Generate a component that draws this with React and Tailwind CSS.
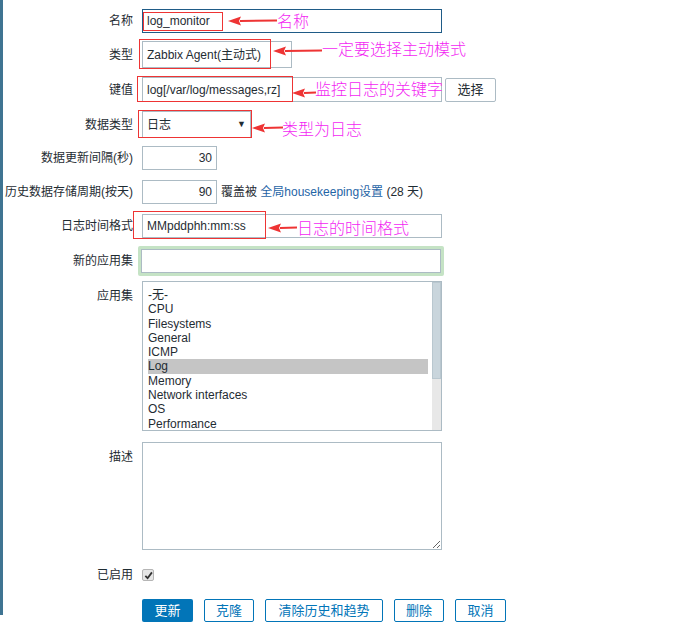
import React from "react";

const apps = ["-无-", "CPU", "Filesystems", "General", "ICMP", "Log", "Memory", "Network interfaces", "OS", "Performance"];

function Row({ label, top = false, className = "", children }) {
  return (
    <div className={`flex gap-[9px] ${top ? "items-start" : "items-center"} ${className}`}>
      <label className={`w-[130px] shrink-0 text-right ${top ? "pt-[6px]" : ""}`}>{label}</label>
      {children}
    </div>
  );
}

// red annotation: box around the value, arrow and magenta note
function Note({ box, arrow, text }) {
  const [bx, by, bw, bh] = box;
  const [x1, x2, ay] = arrow;
  const [tx, ty, note] = text;
  return (
    <>
      <div className="absolute border border-[#ee3434]" style={{ left: bx, top: by, width: bw, height: bh }} />
      <svg className="absolute" style={{ left: x1, top: ay - 5, width: x2 - x1, height: 10 }} viewBox={`0 0 ${x2 - x1} 10`}>
        <path d={`M12 5 L${x2 - x1} 4.6`} stroke="#ee3434" strokeWidth="2" />
        <path d="M0 5 L13 0.5 L11 5 L13 9.5 Z" fill="#ee3434" />
      </svg>
      <span
        className="absolute whitespace-nowrap font-['Noto_Sans_CJK_SC',sans-serif] text-[16px] leading-[20px] font-light text-[#f21ff2]"
        style={{ left: tx, top: ty - 10 }}
      >
        {note}
      </span>
    </>
  );
}

export default function App() {
  return (
    <div className="relative h-[630px] w-[685px] overflow-hidden bg-white font-['Liberation_Sans','Noto_Sans_CJK_SC',sans-serif] text-[12px] text-[#1f2c33]">
      <div className="flex h-full">
        <div className="h-[615px] w-[3px] shrink-0 bg-[#3f7492]" />
        <form className="flex flex-1 flex-col pt-[9px]">
          <Row label="名称">
            <div className="flex h-[24px] w-[300px] items-center border border-[#1f5b87] px-[4px]">log_monitor</div>
          </Row>
          <Row label="类型" className="mt-[8px]">
            <div className="flex h-[27px] w-[150px] items-center border border-[#acbbc4] px-[4px]">Zabbix Agent(主动式)</div>
          </Row>
          <Row label="键值" className="mt-[9px]">
            <div className="flex h-[25px] w-[300px] items-center border border-[#acbbc4] px-[4px]">log[/var/log/messages,rz]</div>
            <button type="button" className="ml-[-6px] h-[24px] w-[51px] rounded-[2px] border border-[#acbbc4] bg-white text-[13px]">选择</button>
          </Row>
          <Row label="数据类型" className="mt-[9px]">
            <div className="flex h-[27px] w-[109px] items-center justify-between border border-[#acbbc4] px-[4px]">
              <span>日志</span>
              <span className="text-[9px]">▼</span>
            </div>
          </Row>
          <Row label="数据更新间隔(秒)" className="mt-[8px]">
            <div className="flex h-[24px] w-[75px] items-center justify-end border border-[#acbbc4] px-[4px]">30</div>
          </Row>
          <Row label="历史数据存储周期(按天)" className="mt-[10px]">
            <div className="flex h-[24px] w-[75px] items-center justify-end border border-[#acbbc4] px-[4px]">90</div>
            <span className="ml-[-5px]">
              覆盖被 <span className="text-[#1f65a6]">全局housekeeping设置</span> (28 天)
            </span>
          </Row>
          <Row label="日志时间格式" className="mt-[10px]">
            <div className="flex h-[24px] w-[300px] items-center border border-[#acbbc4] px-[4px]">MMpddphh:mm:ss</div>
          </Row>
          <Row label="新的应用集" className="mt-[8px]">
            <div className="ml-[-4px] rounded-[2px] border-[3px] border-[#c5e3c5] p-0">
              <div className="h-[24px] w-[300px] border border-[#acbbc4]" />
            </div>
          </Row>
          <Row label="应用集" top className="mt-[5px]">
            <div className="flex h-[150px] w-[300px] border border-[#acbbc4]">
              <div className="flex-1 pl-[5px] pr-[4px] pt-[6px]">
                {apps.map((a) => (
                  <div key={a} className={`h-[14.3px] leading-[14.3px] ${a === "Log" ? "bg-[#c5c5c5]" : ""}`}>{a}</div>
                ))}
              </div>
              <div className="flex w-[9px] flex-col bg-[#e8e8e8]">
                <div className="h-[97px] border border-[#b9c7cf] bg-[#c9d5dc]" />
              </div>
            </div>
          </Row>
          <Row label="描述" top className="mt-[11px]">
            <textarea className="h-[108px] w-[300px] resize border border-[#acbbc4] outline-none" />
          </Row>
          <Row label="已启用" className="mt-[16px]">
            <div className="flex h-[12px] w-[12px] items-center justify-center rounded-[2px] border border-[#b5b5b5] bg-[#e6e6e6]">
              <svg viewBox="0 0 10 10" className="h-[9px] w-[9px]">
                <path d="M1.5 5.5 L4 8 L8.8 1.5" stroke="#333" strokeWidth="2" fill="none" />
              </svg>
            </div>
          </Row>
          <div className="mt-[15px] flex gap-[11px] pl-[139px] text-[13px]">
            <button type="button" className="h-[23px] w-[51px] rounded-[2px] bg-[#0275b8] text-white">更新</button>
            <button type="button" className="h-[23px] w-[50px] rounded-[2px] border border-[#0275b8] text-[#0275b8]">克隆</button>
            <button type="button" className="h-[23px] w-[118px] rounded-[2px] border border-[#0275b8] text-[#0275b8]">清除历史和趋势</button>
            <button type="button" className="h-[23px] w-[50px] rounded-[2px] border border-[#0275b8] text-[#0275b8]">删除</button>
            <button type="button" className="h-[23px] w-[51px] rounded-[2px] border border-[#0275b8] text-[#0275b8]">取消</button>
          </div>
        </form>
      </div>

      <Note box={[143, 12, 80, 19]} arrow={[228, 277, 21]} text={[277, 20, "名称"]} />
      <Note box={[139, 39, 132, 30]} arrow={[273, 322, 51]} text={[322, 48, "一定要选择主动模式"]} />
      <Note box={[137, 76, 156, 26]} arrow={[292, 316, 93]} text={[315, 88, "监控日志的关键字"]} />
      <Note box={[138, 110, 114, 28]} arrow={[252, 283, 128]} text={[282, 128, "类型为日志"]} />
      <Note box={[133, 211, 133, 28]} arrow={[268, 297, 228]} text={[297, 227, "日志的时间格式"]} />
    </div>
  );
}
